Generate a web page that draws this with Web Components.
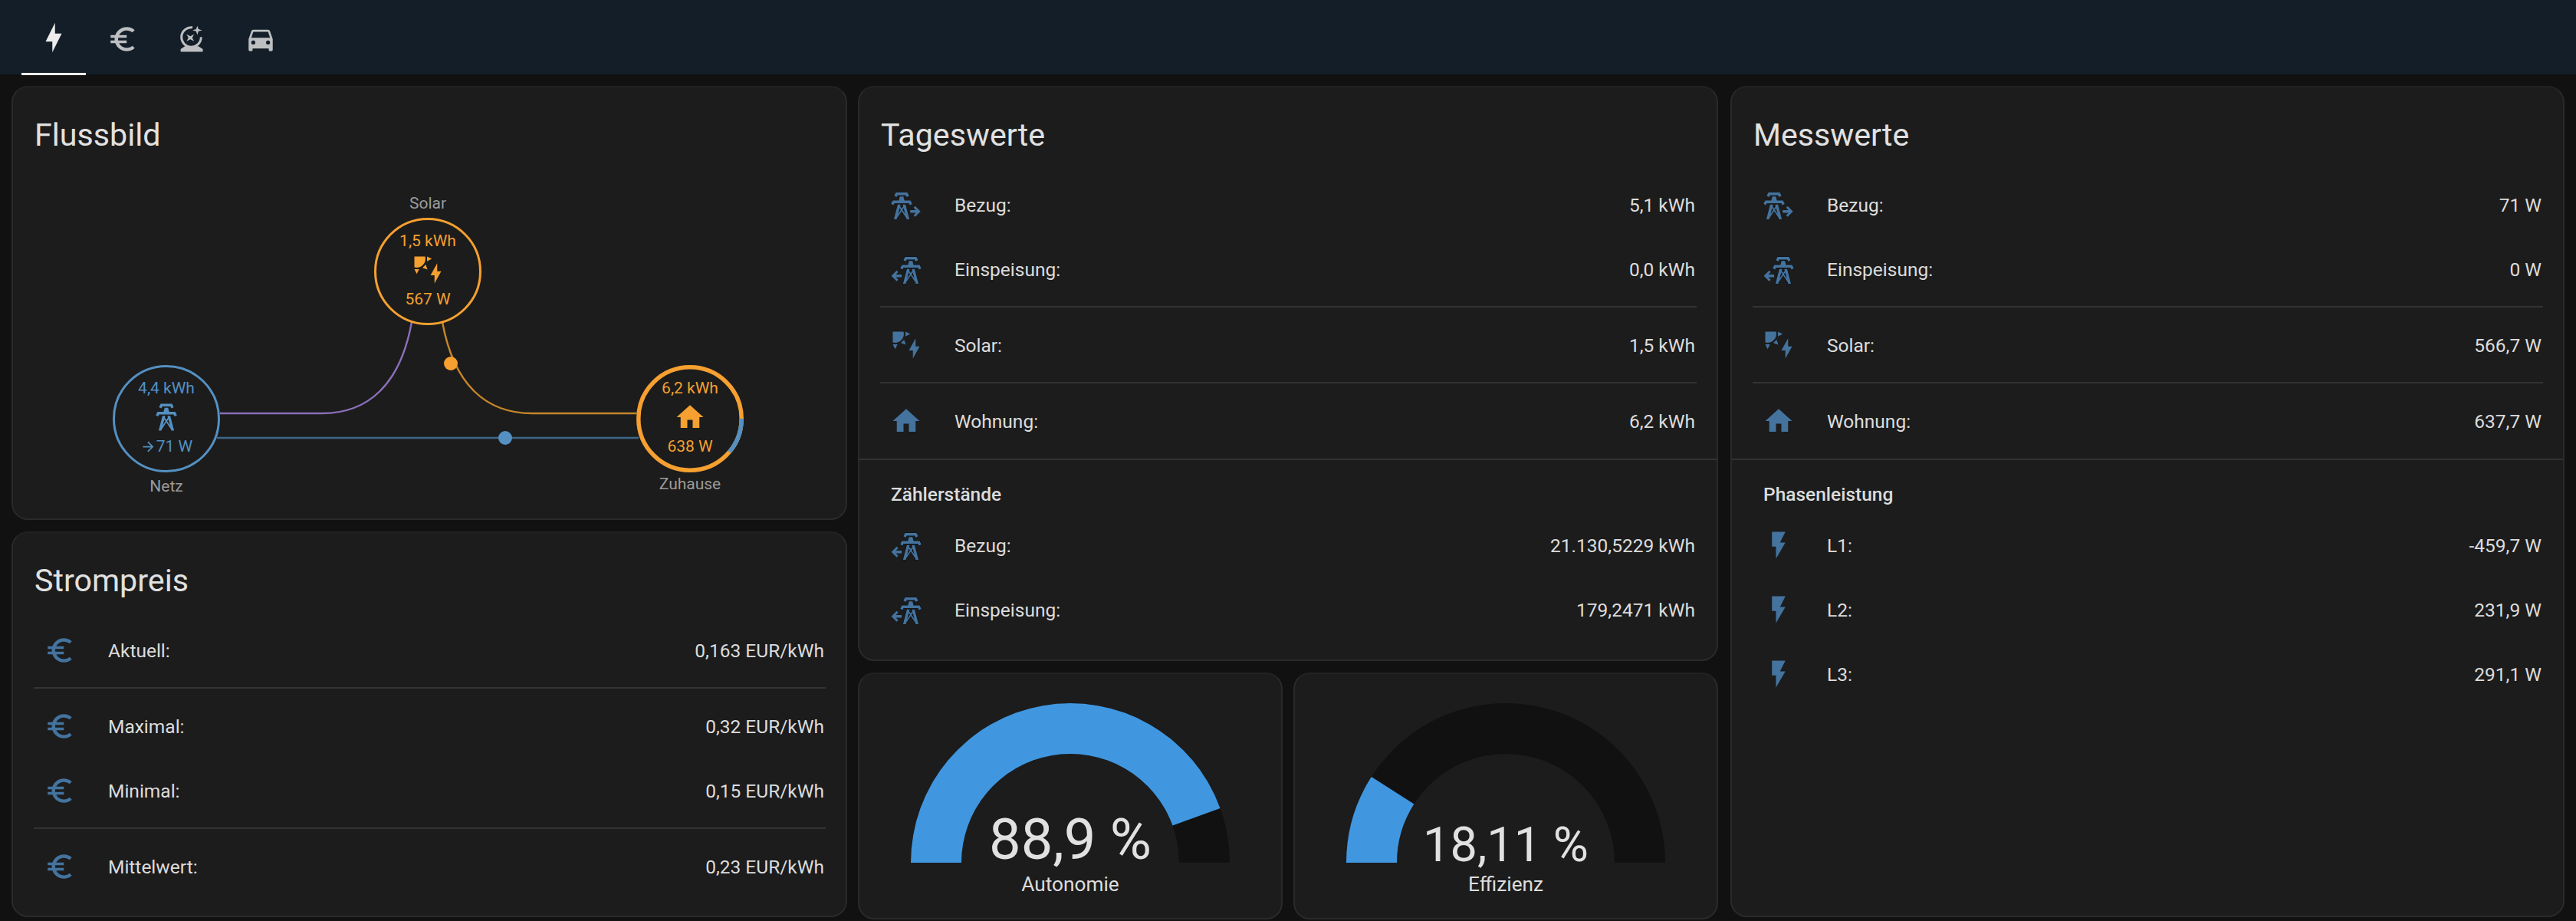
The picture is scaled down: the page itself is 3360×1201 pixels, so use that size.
<!DOCTYPE html>
<html lang="de">
<head>
<meta charset="utf-8">
<title>Energie</title>
<style>
  html, body { margin: 0; height: 100%; overflow: hidden; }
  body { background: #111; color: #dcdcdc; font-family: Roboto, "Liberation Sans", sans-serif; font-size: 24.5px; }
  main { display: flex; align-items: flex-start; padding: 15px 0 0 15px; }
  .col { display: flex; flex-direction: column; gap: 15px; }
  .gauges { display: flex; gap: 14px; }
</style>
</head>
<body>
<top-bar></top-bar>
<main>
  <div class="col" style="width:1090px">
    <ha-card heading="Flussbild" style="height:566px">
      <flow-diagram></flow-diagram>
    </ha-card>
    <ha-card heading="Strompreis" style="height:503px">
      <entity-row icon="eur" label="Aktuell:" value="0,163 EUR/kWh"></entity-row>
      <row-divider></row-divider>
      <entity-row icon="eur" label="Maximal:" value="0,32 EUR/kWh"></entity-row>
      <entity-row icon="eur" label="Minimal:" value="0,15 EUR/kWh"></entity-row>
      <row-divider></row-divider>
      <entity-row icon="eur" label="Mittelwert:" value="0,23 EUR/kWh"></entity-row>
    </ha-card>
  </div>
  <div class="col" style="width:1122px;margin-left:14px">
    <ha-card heading="Tageswerte" style="height:750px">
      <entity-row icon="tower-export" label="Bezug:" value="5,1 kWh"></entity-row>
      <entity-row icon="tower-import" label="Einspeisung:" value="0,0 kWh"></entity-row>
      <row-divider></row-divider>
      <entity-row icon="solar" label="Solar:" value="1,5 kWh"></entity-row>
      <row-divider></row-divider>
      <entity-row icon="home" label="Wohnung:" value="6,2 kWh"></entity-row>
      <section-row>Zählerstände</section-row>
      <entity-row icon="tower-import" label="Bezug:" value="21.130,5229 kWh"></entity-row>
      <entity-row icon="tower-import" label="Einspeisung:" value="179,2471 kWh"></entity-row>
    </ha-card>
    <div class="gauges">
      <gauge-card value="88.9" text="88,9 %" size="74" base="203" name="Autonomie" style="width:554px"></gauge-card>
      <gauge-card value="18.11" text="18,11 %" size="63" base="206" name="Effizienz" style="width:554px"></gauge-card>
    </div>
  </div>
  <div class="col" style="width:1088px;margin-left:16px">
    <ha-card heading="Messwerte" style="height:1084px">
      <entity-row icon="tower-export" label="Bezug:" value="71 W"></entity-row>
      <entity-row icon="tower-import" label="Einspeisung:" value="0 W"></entity-row>
      <row-divider></row-divider>
      <entity-row icon="solar" label="Solar:" value="566,7 W"></entity-row>
      <row-divider></row-divider>
      <entity-row icon="home" label="Wohnung:" value="637,7 W"></entity-row>
      <section-row>Phasenleistung</section-row>
      <entity-row icon="flash" label="L1:" value="-459,7 W"></entity-row>
      <entity-row icon="flash" label="L2:" value="231,9 W"></entity-row>
      <entity-row icon="flash" label="L3:" value="291,1 W"></entity-row>
    </ha-card>
  </div>
</main>

<script>
// Trazos de los iconos, sobre una caja de 24x24
const TOWER = 'M8.28,5.45L6.5,4.55L7.76,2H16.23L17.5,4.55L15.72,5.44L15,4H9L8.28,5.45M18.62,8H14.09L13.3,5H10.7L9.91,8H5.38L4.1,10.55L5.89,11.44L6.62,10H17.38L18.1,11.45L19.89,10.56L18.62,8M17.77,22H15.7L15.46,21.1L12,15.9L8.53,21.1L8.3,22H6.23L9.12,11H11.19L10.83,12.35L12,14.1L13.16,12.35L12.81,11H14.88L17.77,22M11.4,15L10.5,13.65L9.32,18.13L11.4,15M14.68,18.12L13.5,13.64L12.6,15L14.68,18.12Z'

const ICONS = {
  bolt: '<path d="M11 15H6L13 1V9H18L11 23V15Z"/>',
  flash: '<path d="M7,2V13H10V22L17,10H13L17,2H7Z"/>',
  eur: '<path d="M15,18.5C12.5,18.5 10.32,17 9.34,15H15V13H8.66C8.61,12.67 8.58,12.34 8.58,12C8.58,11.66 8.61,11.33 8.66,11H15V9H9.34C10.32,7 12.5,5.5 15,5.5C16.61,5.5 18.08,6.09 19.22,7.06L21,5.3C19.41,3.87 17.3,3 15,3C11.08,3 7.76,5.51 6.52,9H3V11H6.06C6.02,11.33 6,11.66 6,12C6,12.34 6.02,12.67 6.06,13H3V15H6.52C7.76,18.5 11.08,21 15,21C17.31,21 19.41,20.13 21,18.7L19.22,16.94C18.08,17.91 16.62,18.5 15,18.5Z"/>',
  car: '<path d="M5,11L6.5,6.5H17.5L19,11M17.5,16A1.5,1.5 0 0,1 16,14.5A1.5,1.5 0 0,1 17.5,13A1.5,1.5 0 0,1 19,14.5A1.5,1.5 0 0,1 17.5,16M6.5,16A1.5,1.5 0 0,1 5,14.5A1.5,1.5 0 0,1 6.5,13A1.5,1.5 0 0,1 8,14.5A1.5,1.5 0 0,1 6.5,16M18.92,6C18.72,5.42 18.16,5 17.5,5H6.5C5.84,5 5.28,5.42 5.08,6L3,12V20A1,1 0 0,0 4,21H5A1,1 0 0,0 6,20V19H18V20A1,1 0 0,0 19,21H20A1,1 0 0,0 21,20V12L18.92,6Z"/>',
  ball: `<path d="M3.8,21.4V19.4L7,17.3H17L20.3,19.4V21.4Z"/>
    <path fill="none" stroke="currentColor" stroke-width="1.7" d="M19,10.5A7.3,7.3 0 1 1 12.6,3.3"/>
    <path d="M16.2,2.1L17.1,4.6L19.8,5.4L17.1,6.2L16.2,8.8L15.3,6.2L12.7,5.4L15.3,4.6Z"/>
    <path d="M8.2,8.4L11,9.8L13.8,8.4L12.4,11L13.8,13.6L11,12.2L8.2,13.6L9.6,11Z"/>`,
  home: '<path d="M10,20V14H14V20H19V12H22L12,3L2,12H5V20H10Z"/>',
  solar: '<path d="M11.45,2V5.55L15,3.77L11.45,2M10.45,8L8,10.46L11.75,11.71L10.45,8M2,11.45L3.77,15L5.55,11.45H2M10,2H2V10C2.57,10.17 3.17,10.25 3.77,10.25C7.35,10.26 10.26,7.35 10.27,3.75C10.26,3.16 10.17,2.57 10,2M17,22V16H14L19,7V13H22L17,22Z"/>',
  tower: `<path d="${TOWER}"/>`,
  'tower-export': `<path transform="translate(-3.4 .8)" d="${TOWER}"/>
    <path d="M15,16H19.3L17.5,14.2L18.7,13L22.7,17L18.7,21L17.5,19.8L19.3,18H15Z"/>`,
  // el original lleva un halo oscuro alrededor de la torre
  'tower-import': `<path transform="translate(3.4 .8)" d="${TOWER}" stroke="#0e1216" stroke-width=".7" paint-order="stroke"/>
    <path d="M8.6,16H4.3L6.1,14.2L4.9,13L.9,17L4.9,21L6.1,19.8L4.3,18H8.6Z"/>`,
}

class MdiIcon extends HTMLElement {
  constructor() {
    super()
    this.attachShadow({ mode: 'open' })
  }

  connectedCallback() {
    const name = this.getAttribute('name')
    this.shadowRoot.innerHTML = `
      <style>
        :host { display: inline-flex; width: 42px; height: 42px; flex: none; }
        svg { width: 100%; height: 100%; fill: currentColor; display: block; }
      </style>
      <svg viewBox="0 0 24 24">${ICONS[name]}</svg>
    `
  }
}

class TopBar extends HTMLElement {
  constructor() {
    super()
    this.attachShadow({ mode: 'open' })
  }

  connectedCallback() {
    const tabs = ['bolt', 'eur', 'ball', 'car']
    this.shadowRoot.innerHTML = `
      <style>
        :host { display: flex; gap: 6px; height: 97px; padding-left: 28px; background: #131e28; box-sizing: border-box; }
        div { width: 84px; display: flex; align-items: center; justify-content: center; box-sizing: border-box; padding-top: 4px; color: #bdbfc1; }
        div.on { color: #ececec; border-bottom: 3.5px solid #ececec; padding-top: 3px; height: 98px; }
      </style>
      ${tabs.map((t, i) => `<div class="${i === 0 ? 'on' : ''}"><mdi-icon name="${t}"></mdi-icon></div>`).join('')}
    `
  }
}

class HaCard extends HTMLElement {
  constructor() {
    super()
    this.attachShadow({ mode: 'open' })
  }

  connectedCallback() {
    this.shadowRoot.innerHTML = `
      <style>
        :host { display: block; box-sizing: border-box; position: relative; background: #1c1c1c; border: 2px solid #2a2a2a; border-top-color: #222; border-radius: 21px; }
        h2 { margin: 0; padding: 20px 28px 0; height: 106px; box-sizing: border-box; font-size: 41.2px; font-weight: 400; line-height: 84px; color: #e1e1e1; }
      </style>
      <h2>${this.getAttribute('heading')}</h2>
      <slot></slot>
    `
  }
}

class EntityRow extends HTMLElement {
  constructor() {
    super()
    this.attachShadow({ mode: 'open' })
  }

  connectedCallback() {
    this.shadowRoot.innerHTML = `
      <style>
        :host { display: flex; align-items: center; height: 84px; padding: 0 28px 0 26px; }
        :host(:first-of-type) { margin-top: 5px; }
        .ico { width: 70px; display: flex; justify-content: center; color: #44739e; flex: none; }
        .lbl { margin-left: 28px; flex: 1; }
      </style>
      <div class="ico"><mdi-icon name="${this.getAttribute('icon')}"></mdi-icon></div>
      <span class="lbl">${this.getAttribute('label')}</span>
      <span>${this.getAttribute('value')}</span>
    `
  }
}

class RowDivider extends HTMLElement {
  constructor() {
    super()
    this.attachShadow({ mode: 'open' })
  }

  connectedCallback() {
    this.shadowRoot.innerHTML = `
      <style>
        :host { display: block; height: 2px; margin: 6px 26px 7px 27px; background: #333; }
      </style>
    `
  }
}

class SectionRow extends HTMLElement {
  constructor() {
    super()
    this.attachShadow({ mode: 'open' })
  }

  connectedCallback() {
    this.shadowRoot.innerHTML = `
      <style>
        :host { display: block; margin-top: 7px; border-top: 2px solid #333; height: 71px; box-sizing: border-box; padding: 32px 0 0 41px; font-weight: 500; line-height: 26px; }
      </style>
      <slot></slot>
    `
  }
}

class GaugeCard extends HTMLElement {
  constructor() {
    super()
    this.attachShadow({ mode: 'open' })
  }

  // punto del arco para una fracción de 0 a 1, de izquierda a derecha
  point(r, part) {
    const a = Math.PI * (1 - part)
    return `${(208 + r * Math.cos(a)).toFixed(2)} ${(208 - r * Math.sin(a)).toFixed(2)}`
  }

  connectedCallback() {
    const part = Number(this.getAttribute('value')) / 100
    const base = this.getAttribute('base')
    this.shadowRoot.innerHTML = `
      <style>
        :host { display: flex; flex-direction: column; align-items: center; box-sizing: border-box; height: 322px; background: #1c1c1c; border: 2px solid #2a2a2a; border-top-color: #222; border-radius: 21px; padding-top: 38px; }
        svg { width: 416px; height: 208px; overflow: visible; display: block; }
        text { fill: #e1e1e1; font-family: Roboto, sans-serif; text-anchor: middle; }
        span { margin-top: 12px; font-size: 26.25px; line-height: 32px; color: #dcdcdc; }
      </style>
      <svg viewBox="0 0 416 208">
        <path fill="#111" d="M${this.point(208, 0)} A208 208 0 0 1 ${this.point(208, 1)} L${this.point(142, 1)} A142 142 0 0 0 ${this.point(142, 0)} Z"/>
        <path fill="#4097e0" d="M${this.point(208, 0)} A208 208 0 0 1 ${this.point(208, part)} L${this.point(142, part)} A142 142 0 0 0 ${this.point(142, 0)} Z"/>
        <text x="208" y="${base}" font-size="${this.getAttribute('size')}">${this.getAttribute('text')}</text>
      </svg>
      <span>${this.getAttribute('name')}</span>
    `
  }
}

class FlowNode extends HTMLElement {
  constructor() {
    super()
    this.attachShadow({ mode: 'open' })
  }

  connectedCallback() {
    const color = this.getAttribute('color')
    const isHome = this.hasAttribute('home')
    const labelBelow = !this.hasAttribute('label-top')
    this.shadowRoot.innerHTML = `
      <style>
        :host { position: absolute; left: calc(var(--x) - 70px); top: calc(var(--y) - 70px); width: 140px; height: 140px; box-sizing: border-box; border-radius: 50%; background: #1c1c1c; border: ${isHome ? '0' : `3.5px solid ${color}`}; color: ${color}; font-size: 21px; line-height: 24px; display: flex; flex-direction: column; align-items: center; justify-content: center; gap: 5px; padding-bottom: 4px; }
        svg.ring { position: absolute; inset: 0; width: 140px; height: 140px; }
        div { white-space: nowrap; display: flex; align-items: center; }
        .name { position: absolute; left: 50%; transform: translateX(-50%); color: #9b9b9b; ${labelBelow ? 'top: 143px' : 'bottom: 144px'}; }
      </style>
      ${isHome ? `<svg class="ring" viewBox="0 0 140 140" fill="none" stroke-width="5.5">
        <circle cx="70" cy="70" r="67.2" stroke="#f5a030"/>
        <circle cx="70" cy="70" r="67.2" stroke="#5490c2" stroke-dasharray="46.9 400"/>
      </svg>` : ''}
      <div>${this.getAttribute('top')}</div>
      <mdi-icon name="${this.getAttribute('icon')}"></mdi-icon>
      <div><slot></slot></div>
      <div class="name">${this.getAttribute('label')}</div>
    `
  }
}

class FlowDiagram extends HTMLElement {
  constructor() {
    super()
    this.attachShadow({ mode: 'open' })
  }

  connectedCallback() {
    const arrow = '<svg class="arrow" viewBox="0 0 24 24"><path d="M4,11V13H16L10.5,18.5L11.92,19.92L19.84,12L11.92,4.08L10.5,5.5L16,11H4Z"/></svg>'
    this.shadowRoot.innerHTML = `
      <style>
        :host { display: block; position: relative; width: 1086px; height: 458px; }
        .lines { position: absolute; inset: 0; }
        .arrow { width: 21px; height: 21px; fill: currentColor; vertical-align: -3px; }
      </style>
      <svg class="lines" width="1086" height="458" viewBox="0 0 1086 458" fill="none" stroke-width="2.4">
        <path stroke="#8a6fb8" d="M270,319H403C463,319 505,282 520,200"/>
        <path stroke="#c4862b" d="M560,200C575,282 617,319 677,319H815"/>
        <path stroke="#3d6789" d="M266,351H816"/>
        <circle cx="571" cy="254" r="9" fill="#f5a030"/>
        <circle cx="642" cy="351" r="9" fill="#5490c2"/>
      </svg>
      <flow-node style="--x:541px;--y:134px" label-top label="Solar" top="1,5 kWh" icon="solar" color="#f5a030">567 W</flow-node>
      <flow-node style="--x:200px;--y:326px" label="Netz" top="4,4 kWh" icon="tower" color="#5490c2">${arrow}71 W</flow-node>
      <flow-node style="--x:883px;--y:326px" home label="Zuhause" top="6,2 kWh" icon="home" color="#f5a030">638 W</flow-node>
    `
  }
}

customElements.define('mdi-icon', MdiIcon)
customElements.define('top-bar', TopBar)
customElements.define('ha-card', HaCard)
customElements.define('entity-row', EntityRow)
customElements.define('row-divider', RowDivider)
customElements.define('section-row', SectionRow)
customElements.define('gauge-card', GaugeCard)
customElements.define('flow-node', FlowNode)
customElements.define('flow-diagram', FlowDiagram)
</script>
</body>
</html>
